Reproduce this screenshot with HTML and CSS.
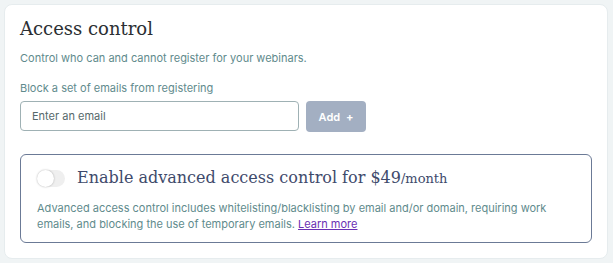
FILE: index.html
```html
<!DOCTYPE html>
<html>
<head>
<meta charset="utf-8">
<link rel="stylesheet" href="styles.css">
</head>
<body>
<div class="card">
  <h1 class="title">Access control</h1>
  <p class="sub">Control who can and cannot register for your webinars.</p>
  <label class="label">Block a set of emails from registering</label>
  <div class="row">
    <input class="email" type="text" placeholder="Enter an email">
    <button class="add">Add <span class="plus">+</span></button>
  </div>
  <div class="box">
    <div class="box-head">
      <span class="toggle"><span class="knob"></span></span>
      <span class="box-title">Enable advanced access control for $49<span class="per">/month</span></span>
    </div>
    <p class="desc">Advanced access control includes whitelisting/blacklisting by email and/or domain, requiring work emails, and blocking the use of temporary emails. <a class="link" href="#">Learn more</a></p>
  </div>
</div>
</body>
</html>
```
FILE: styles.css
```css
html, body { margin: 0; padding: 0; }
body {
  background: #f0f4f5;
  padding: 4px 5px 4px 4px;
  font-family: "Inter", "Noto Sans", sans-serif;
}
.card {
  background: #fff;
  border-radius: 8px;
  border: 1px solid #e6ecee;
  padding: 11px 15px 15px 15px;
  height: 255px;
  box-sizing: border-box;
}
.title {
  font-family: "DejaVu Serif", serif;
  font-weight: normal;
  font-size: 18px;
  color: #2b2f33;
  margin: 0;
  line-height: 26px;
}
.sub {
  margin: 9px 0 0;
  font-size: 11px;
  color: #5f8b8d;
  line-height: 14px;
}
.label {
  display: block;
  margin-top: 16px;
  font-size: 11px;
  color: #5f8b8d;
  line-height: 14px;
}
.row {
  display: flex;
  gap: 7px;
  margin-top: 6px;
}
.email {
  width: 279px;
  height: 30px;
  box-sizing: border-box;
  border: 1px solid #9fb1b4;
  border-radius: 4px;
  padding: 0 11px;
  font-family: inherit;
  font-size: 11px;
  color: #333;
  outline: none;
}
.email::placeholder { color: #56696b; }
.add {
  width: 60px;
  height: 31px;
  border: none;
  border-radius: 4px;
  background: #a3afc2;
  color: #fff;
  font-family: inherit;
  font-size: 11px;
  font-weight: 600;
  padding: 0;
}
.plus { margin-left: 3px; font-weight: 700; }
.box {
  margin-top: 22px;
  border: 1px solid #6b7a96;
  border-radius: 6px;
  padding: 10px 16px 10px 16px;
}
.box-head {
  display: flex;
  align-items: center;
  gap: 12px;
}
.toggle {
  width: 28px;
  height: 17px;
  border-radius: 9px;
  background: #efefef;
  position: relative;
  flex: none;
}
.knob {
  position: absolute;
  left: 0;
  top: 0;
  width: 17px;
  height: 17px;
  border-radius: 50%;
  background: #fff;
  box-shadow: 0 0 2px rgba(0,0,0,0.3);
}
.box-title {
  font-family: "DejaVu Serif", serif;
  font-size: 16px;
  color: #3e4a6b;
  line-height: 26px;
}
.per { font-size: 13px; }
.desc {
  margin: 8px 0 0;
  font-size: 11px;
  line-height: 16px;
  color: #5f8b8d;
}
.link { color: #6a2fb3; text-decoration: underline; }
```
